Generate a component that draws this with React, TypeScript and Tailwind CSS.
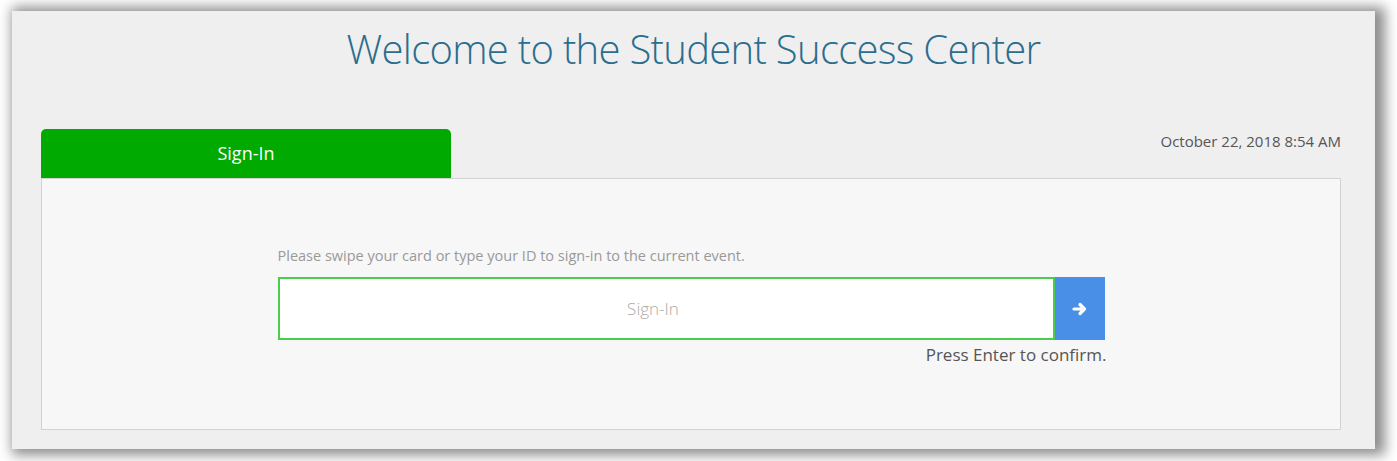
export default function App() {
  return (
    <main className="h-[461px] w-[1397px] overflow-hidden bg-white pl-[12px] pt-[11px] font-['Open_Sans',sans-serif]">
      <div className="h-[438px] w-[1363px] bg-[#efefef] pt-[18px] shadow-[5px_1px_12px_5px_rgba(0,0,0,0.45)]">
        <h1 className="text-center text-[40px] leading-[40px] font-light tracking-[-0.7px] text-[#2b6d8e]">
          Welcome to the Student Success Center
        </h1>

        <div className="mt-[60px] flex items-start justify-between pl-[29px] pr-[34px]">
          <div className="flex h-[49px] w-[410px] items-center justify-center rounded-t-[5px] bg-[#00aa00] text-[18px] text-white">
            Sign-In
          </div>
          <div className="mt-[2px] text-[15px] leading-[20px] text-[#555]">
            October 22, 2018 8:54 AM
          </div>
        </div>

        <section className="ml-[29px] h-[252px] w-[1300px] border border-[#d2d2d2] bg-[#f7f7f7] pt-[67px]">
          <div className="mx-auto w-[827px]">
            <p className="mb-[12px] text-[14.5px] leading-[19px] text-[#999]">
              Please swipe your card or type your ID to sign-in to the current event.
            </p>
            <div className="flex h-[63px]">
              <div className="flex flex-1 items-center justify-center border-2 border-[#4ccc4c] bg-white pr-[26px] text-[17px] font-light text-[#aaa]">
                Sign-In
              </div>
              <button className="flex w-[50px] items-center justify-center bg-[#4a8fe7] text-white">
                {/* chunky arrow like the font-awesome one */}
                <svg width="15" height="14" viewBox="0 0 15 14" fill="none">
                  <path
                    d="M2 7h10M8 2.5l4.5 4.5L8 11.5"
                    stroke="currentColor"
                    strokeWidth="3.2"
                    strokeLinecap="round"
                    strokeLinejoin="round"
                  />
                </svg>
              </button>
            </div>
            <p className="mr-[-2px] mt-[4px] text-right text-[17px] leading-[22px] text-[#555]">
              Press Enter to confirm.
            </p>
          </div>
        </section>
      </div>
    </main>
  );
}
